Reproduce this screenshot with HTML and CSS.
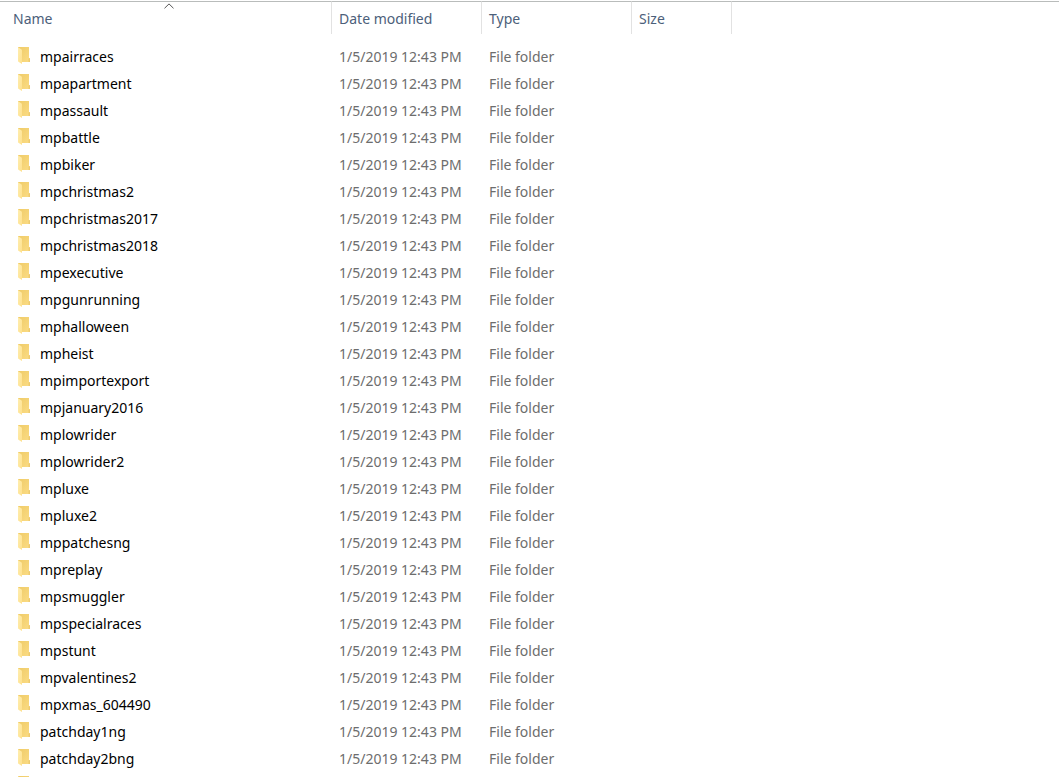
FILE: index.html
```html
<!DOCTYPE html>
<html lang="en">
<head>
<meta charset="utf-8">
<title>File list</title>
<link rel="stylesheet" href="styles.css">
</head>
<body>
<svg class="defs" aria-hidden="true">
  <defs>
    <linearGradient id="back" x1="0" y1="0" x2="1" y2="1">
      <stop offset="0" stop-color="#efcb68"/>
      <stop offset="1" stop-color="#fbdc84"/>
    </linearGradient>
    <linearGradient id="front" x1="0" y1="0" x2="1" y2="1">
      <stop offset="0" stop-color="#ffeeb0"/>
      <stop offset="1" stop-color="#fee08c"/>
    </linearGradient>
    <symbol id="folder" viewBox="0 0 12 17">
      <path d="M0 0H11V11L12 11.500V15H3L0 13Z" fill="url(#back)"/>
      <path d="M11 11L12 11.500V15H10.500V12Z" fill="#edca70"/>
      <path d="M0 0.300L3.600 2.600Q4 2.900 4 3.500V17L0.400 14.800Q0 14.500 0 14Z" fill="url(#front)"/>
    </symbol>
  </defs>
</svg>
<main class="file-list">
<table class="files">
  <colgroup><col class="col-name"><col class="col-date"><col class="col-type"><col class="col-size"><col></colgroup>
  <thead>
    <tr>
      <th scope="col" aria-sort="ascending"><button class="sort" type="button">Name</button><svg class="arrow" viewBox="0 0 10 6" aria-hidden="true"><path d="M0.500 5.300L5 0.900L9.500 5.300"/></svg></th>
      <th scope="col"><button class="sort" type="button">Date modified</button></th>
      <th scope="col"><button class="sort" type="button">Type</button></th>
      <th scope="col"><button class="sort" type="button">Size</button></th>
      <td></td>
    </tr>
  </thead>
  <tbody id="rows"></tbody>
</table>
</main>
<script src="list.js"></script>
</body>
</html>
```
FILE: list.js
```js
const names = [
  "mpairraces", "mpapartment", "mpassault", "mpbattle", "mpbiker",
  "mpchristmas2", "mpchristmas2017", "mpchristmas2018", "mpexecutive",
  "mpgunrunning", "mphalloween", "mpheist", "mpimportexport",
  "mpjanuary2016", "mplowrider", "mplowrider2", "mpluxe", "mpluxe2",
  "mppatchesng", "mpreplay", "mpsmuggler", "mpspecialraces", "mpstunt",
  "mpvalentines2", "mpxmas_604490", "patchday1ng", "patchday2bng", ""
];

document.getElementById("rows").innerHTML = names.map((name) => `
  <tr>
    <td><div class="entry"><svg class="folder" aria-hidden="true"><use href="#folder"/></svg><span class="name">${name}</span></div></td>
    <td>${name && "1/5/2019 12:43 PM"}</td>
    <td>${name && "File folder"}</td>
    <td></td>
    <td></td>
  </tr>`).join("");
```
FILE: styles.css
```css
* {
  box-sizing: border-box;
}

body {
  margin: 0;
  background: #fff;
  color: #6d6d6d;
  font: 14px/27px "Segoe UI", "Noto Sans", "Open Sans", sans-serif;
}

.defs {
  position: absolute;
  width: 0;
  height: 0;
}

.file-list {
  height: 100vh;
  overflow: hidden;
  padding-top: 1px;
}

.files {
  width: 100%;
  table-layout: fixed;
  border-collapse: separate;
  border-spacing: 0;
}

.col-name {
  width: 332px;
}

.col-date,
.col-type {
  width: 150px;
}

.col-size {
  width: 100px;
}

.files td {
  height: 27px;
  padding: 0 7px;
  vertical-align: top;
  white-space: nowrap;
}

.files thead th,
.files thead td {
  position: relative;
  height: 33px;
  padding: 0;
  border-top: 1px solid #b9bcbb;
}

.files thead th {
  border-right: 1px solid #e2e2e2;
  font-weight: 400;
}

.files tbody::before {
  content: "";
  display: block;
  height: 9px;
}

.sort {
  display: block;
  width: 100%;
  height: 32px;
  padding: 0 7px;
  border: 0;
  background: none;
  color: #4c607a;
  font: inherit;
  text-align: left;
}

.files th:first-child .sort {
  padding-left: 13px;
}

.arrow {
  position: absolute;
  top: 1px;
  left: 50%;
  width: 10px;
  height: 6px;
  margin-left: -2px;
  fill: none;
  stroke: #555;
}

.entry {
  display: flex;
  gap: 10px;
  padding-left: 11px;
}

.folder {
  width: 12px;
  height: 17px;
  margin-top: 4px;
}

.name {
  color: #000;
}
```
